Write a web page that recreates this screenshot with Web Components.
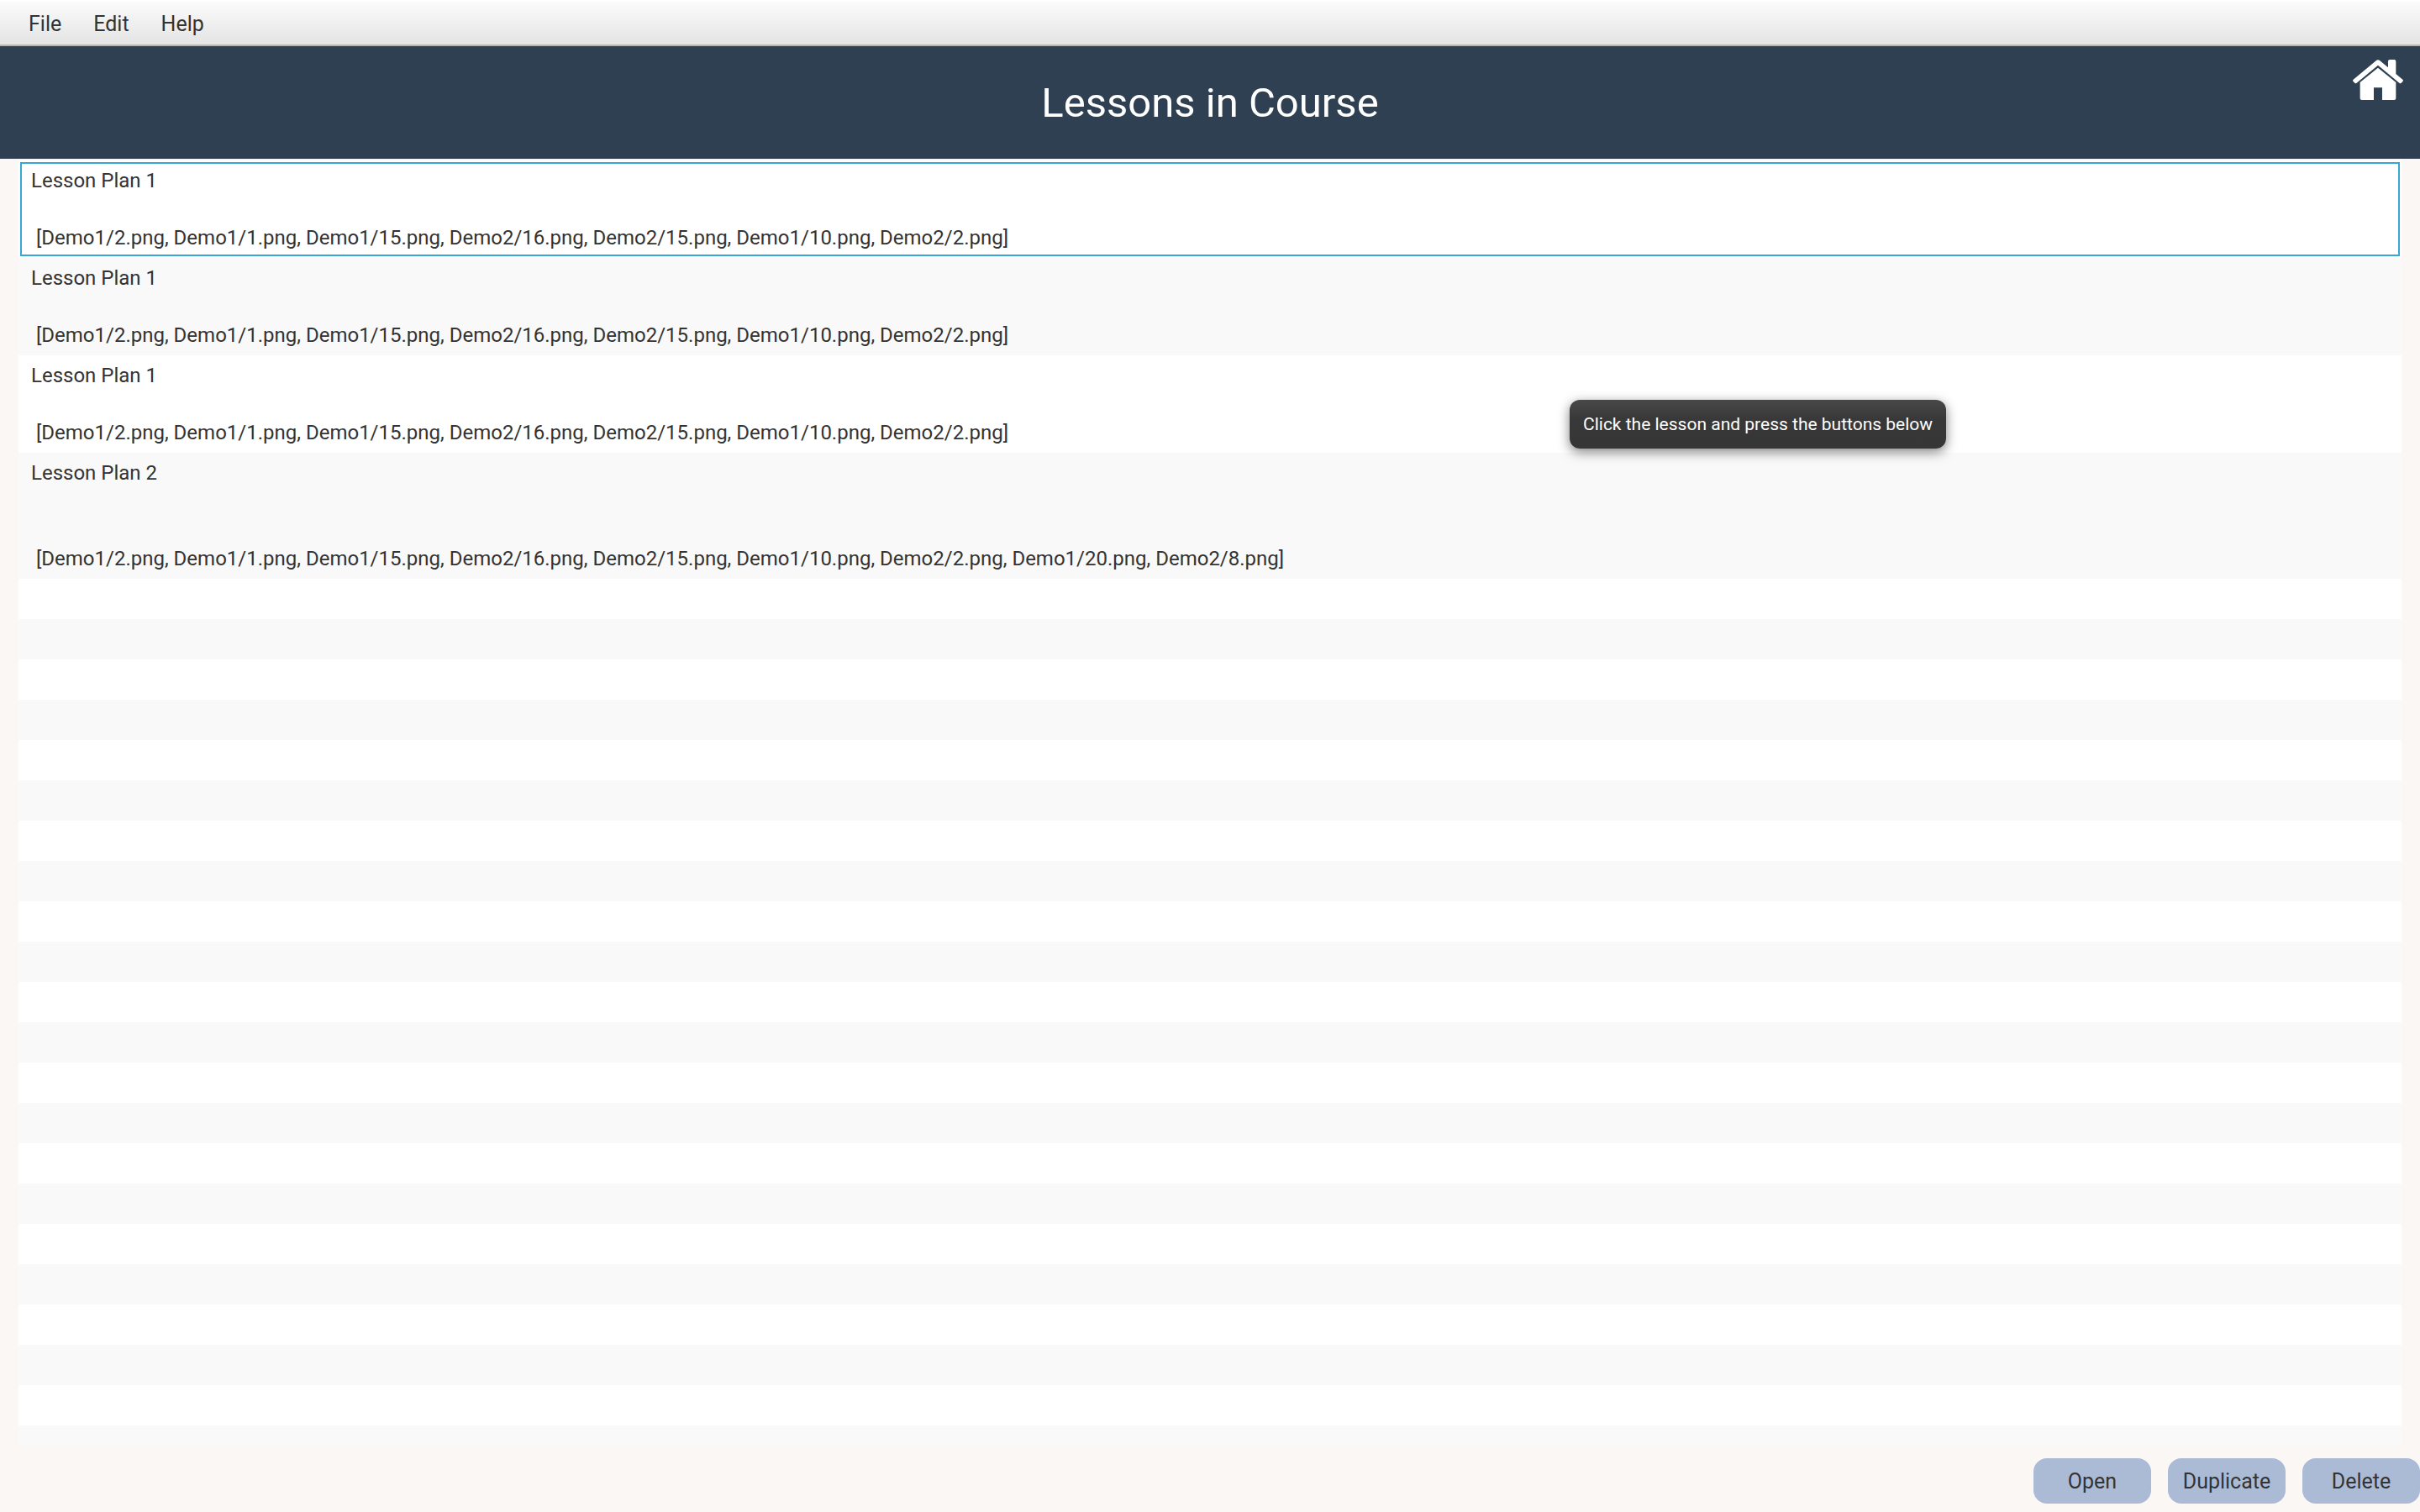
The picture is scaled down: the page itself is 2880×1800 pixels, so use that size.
<!DOCTYPE html>
<html lang="en">
<head>
<meta charset="utf-8">
<title>Lessons in Course</title>
<style>
  body { margin: 0; font-family: Roboto, "Liberation Sans", sans-serif; font-size: 25px; color: #333; background: #fbf7f4; }
</style>
</head>
<body>
<lesson-app></lesson-app>

<template id="t-app">
  <style>
    :host { display: flex; flex-direction: column; height: 100vh; overflow: hidden; }
    lesson-list { flex: 1; min-height: 0; margin: 2px 22px 0; }
    footer { display: flex; justify-content: flex-end; gap: 20px; padding: 15px 0 10px; }
  </style>
  <menu-bar><menu-item>File</menu-item><menu-item>Edit</menu-item><menu-item>Help</menu-item></menu-bar>
  <page-header>Lessons in Course</page-header>
  <lesson-list></lesson-list>
  <footer>
    <action-button>Open</action-button>
    <action-button>Duplicate</action-button>
    <action-button>Delete</action-button>
  </footer>
  <tool-tip>Click the lesson and press the buttons below</tool-tip>
</template>

<template id="t-menubar">
  <style>
    :host { display: block; background: linear-gradient(#fff 0, #fff 2px, #fbfbfb 2px, #e4e4e4 100%); border-bottom: 2px solid #b4b4b4; }
    nav { display: flex; height: 53px; padding: 4px 15px 0; box-sizing: border-box; }
  </style>
  <nav aria-label="Menu"><slot></slot></nav>
</template>

<template id="t-menuitem">
  <style>
    :host { display: flex; }
    button { font: inherit; color: inherit; background: none; border: 0; margin: 0; padding: 0 19px; }
  </style>
  <button type="button"><slot></slot></button>
</template>

<template id="t-header">
  <style>
    :host { display: grid; grid-template-columns: 1fr auto 1fr; height: 134px; background: #2f4052; color: #fff; }
    h1 { grid-column: 2; align-self: center; margin: 0; padding-top: 2px; font-size: 49px; line-height: 60px; font-weight: 400; }
    button { grid-column: 3; justify-self: end; align-self: start; margin: 16px 20px 0 0; padding: 0; border: 0; background: none; color: inherit; }
    svg { display: block; width: 60px; height: 48px; }
  </style>
  <h1><slot></slot></h1>
  <button type="button" aria-label="Home">
    <svg viewBox="0 0 180 144" fill="currentColor" aria-hidden="true">
      <path d="M84 3Q90-2 96 3L126 28V6Q126 1 131 0H149Q154 1 154 6V51L178 71Q181 74 179 77L173 83Q170 86 166 83L90 20L14 83Q10 86 7 83L1 77Q-1 74 2 71Z"/>
      <path d="M90 29L154 81V138Q154 144 148 144H105V100H75V144H32Q26 144 26 138V81Z"/>
    </svg>
  </button>
</template>

<template id="t-list">
  <style>
    :host { display: flex; flex-direction: column; overflow: hidden; font-size: 24px; }
    ul { list-style: none; margin: 0; padding: 0; }
    li { padding: 7px 15px; line-height: 34px; white-space: pre; background: #fff; }
    li:nth-child(even) { background: #f9f9f9; }
    li[aria-current] { outline: 2px solid #35a9d6; outline-offset: -4px; }
    .empty { flex: 1; background: repeating-linear-gradient(#fff 0 48px, #f9f9f9 48px 96px); }
  </style>
  <ul></ul>
  <div class="empty"></div>
</template>

<template id="t-button">
  <style>
    :host { display: block; }
    button { width: 140px; height: 54px; padding: 0; border: 0; border-radius: 16px; font: inherit; color: inherit; background: #abbbd6; }
  </style>
  <button type="button"><slot></slot></button>
</template>

<template id="t-tip">
  <style>
    :host { position: absolute; left: 1868px; top: 476px; padding: 14px 16px; border-radius: 12px; font-size: 21px; line-height: 30px; color: #fff; white-space: nowrap;
      background: linear-gradient(#484848, #383838 40%, #363636); box-shadow: 0 4px 14px rgba(0,0,0,.5); }
  </style>
  <slot></slot>
</template>

<script>
  class Base extends HTMLElement {
    constructor() {
      super();
      const t = document.getElementById(this.constructor.template);
      this.attachShadow({ mode: "open" }).append(t.content.cloneNode(true));
    }
  }
  const lessons = [
    "Lesson Plan 1\n\n [Demo1/2.png, Demo1/1.png, Demo1/15.png, Demo2/16.png, Demo2/15.png, Demo1/10.png, Demo2/2.png]",
    "Lesson Plan 1\n\n [Demo1/2.png, Demo1/1.png, Demo1/15.png, Demo2/16.png, Demo2/15.png, Demo1/10.png, Demo2/2.png]",
    "Lesson Plan 1\n\n [Demo1/2.png, Demo1/1.png, Demo1/15.png, Demo2/16.png, Demo2/15.png, Demo1/10.png, Demo2/2.png]",
    "Lesson Plan 2\n\n\n [Demo1/2.png, Demo1/1.png, Demo1/15.png, Demo2/16.png, Demo2/15.png, Demo1/10.png, Demo2/2.png, Demo1/20.png, Demo2/8.png]"
  ];
  customElements.define("menu-item", class extends Base { static template = "t-menuitem"; });
  customElements.define("menu-bar", class extends Base { static template = "t-menubar"; });
  customElements.define("page-header", class extends Base { static template = "t-header"; });
  customElements.define("action-button", class extends Base { static template = "t-button"; });
  customElements.define("tool-tip", class extends Base {
    static template = "t-tip";
    connectedCallback() { this.setAttribute("role", "tooltip"); }
  });
  customElements.define("lesson-list", class extends Base {
    static template = "t-list";
    connectedCallback() {
      const ul = this.shadowRoot.querySelector("ul");
      ul.replaceChildren(...lessons.map((text, i) => {
        const li = document.createElement("li");
        li.textContent = text;
        if (i === 0) li.setAttribute("aria-current", "true");
        return li;
      }));
    }
  });
  customElements.define("lesson-app", class extends Base { static template = "t-app"; });
</script>
</body>
</html>
